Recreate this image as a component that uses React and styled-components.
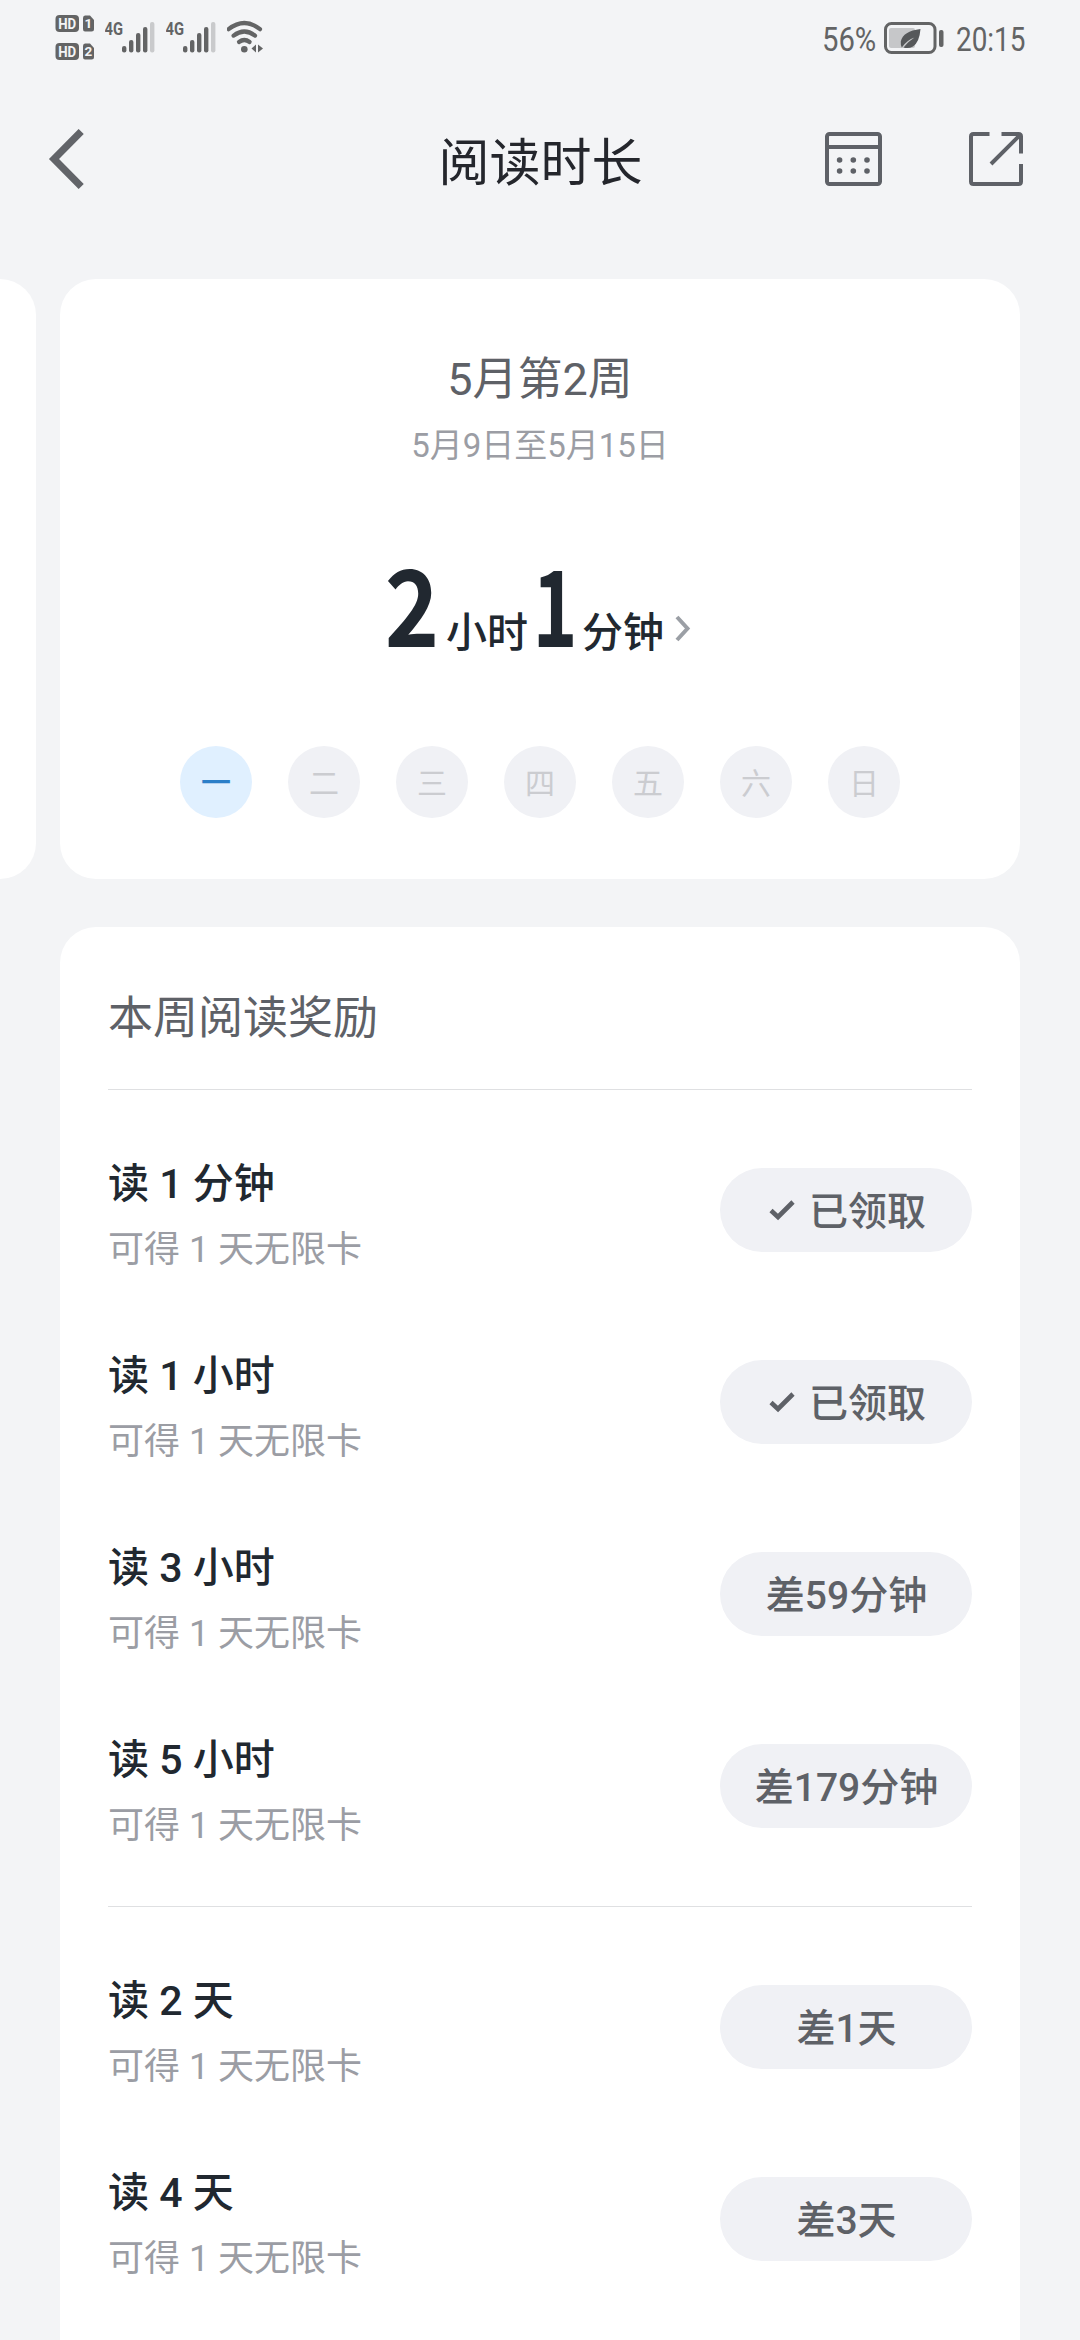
import React from "react";
import styled, { createGlobalStyle } from "styled-components";

const INK = "#212830";
const SLATE = "#5e6167";
const MUTED = "#9b9da4";
const STATUS = "#636465";
const CANVAS = "#f3f4f6";

const GlobalStyle = createGlobalStyle`
  *, *::before, *::after { box-sizing: border-box; }
  html, body { margin: 0; padding: 0; background: ${CANVAS}; }
  body { font-family: Roboto, "Noto Sans CJK SC", sans-serif; color: ${INK}; }
  svg { display: block; flex: none; }
`;

const Page = styled.main`
  width: 1080px;
  height: 2340px;
  overflow: hidden;
  display: flex;
  flex-direction: column;
  background: ${CANVAS};
`;

const StatusBar = styled.div`
  height: 76px;
  flex: none;
  display: flex;
  justify-content: space-between;
  padding: 14px 56px 0 55px;
  color: ${STATUS};
`;

const StatusLeft = styled.div`
  display: flex;
  align-items: flex-start;
`;

const StatusRight = styled.div`
  display: flex;
  align-items: center;
  height: 50px;
`;

const HdColumn = styled.div`
  display: grid;
  gap: 11px;
  margin: 1px 10px 0 0;
`;

const StatusText = styled.span`
  display: block;
  width: ${(p) => p.$width}px;
  font-size: 34px;
  line-height: 48px;
  white-space: nowrap;
  transform: scaleX(${(p) => p.$squeeze});
  transform-origin: 0 50%;
`;

const BatterySlot = styled.div`
  margin: -3px 11px 0 7px;
`;

const Header = styled.header`
  height: 166px;
  flex: none;
  display: grid;
  grid-template-columns: 1fr auto 1fr;
  align-items: center;
`;

const HeaderStart = styled.div`
  padding-left: 48px;
`;

const HeaderTitle = styled.h1`
  margin: 0;
  padding: 9px 0 0 1px;
  font-size: 51px;
  line-height: 72px;
  font-weight: 400;
  color: #24262c;
`;

const HeaderActions = styled.div`
  display: flex;
  justify-content: flex-end;
  gap: 87px;
  padding-right: 57px;
`;

const Carousel = styled.section`
  display: flex;
  gap: 24px;
  height: 600px;
  margin-top: 37px;
  flex: none;
`;

const PreviousWeek = styled.div`
  width: 36px;
  background: #fff;
  border-radius: 0 36px 36px 0;
`;

const WeekCard = styled.article`
  width: 960px;
  background: #fff;
  border-radius: 36px;
  display: flex;
  flex-direction: column;
  align-items: center;
`;

const WeekTitle = styled.h2`
  margin: 68px 0 0;
  font-size: 45px;
  line-height: 66px;
  font-weight: 400;
  color: ${SLATE};
`;

const WeekRange = styled.p`
  margin: 9px 0 0;
  font-size: 33px;
  line-height: 48px;
  color: ${MUTED};
`;

const Duration = styled.div`
  display: flex;
  align-items: baseline;
  height: 120px;
  margin: 71px 0 0 -2px;
`;

const BigDigit = styled.span`
  display: flex;
  justify-content: center;
  width: ${(p) => p.$width}px;
  font-family: "Noto Sans CJK SC", sans-serif;
  font-size: 106px;
  line-height: 120px;
  font-weight: 700;
  transform: scaleX(${(p) => p.$squeeze});
`;

const Unit = styled.span`
  font-size: 41px;
  line-height: 60px;
  font-weight: 500;
  margin: 0 ${(p) => p.$after}px 0 ${(p) => p.$before}px;
`;

const Days = styled.ul`
  display: flex;
  gap: 36px;
  list-style: none;
  margin: 85px 0 0;
  padding: 0;
`;

const Day = styled.li`
  width: 72px;
  height: 72px;
  border-radius: 50%;
  display: flex;
  align-items: center;
  justify-content: center;
  font-size: 30px;
  line-height: 44px;
  padding-top: ${(p) => (p.$active ? 2 : 4)}px;
  font-weight: ${(p) => (p.$active ? 500 : 400)};
  background: ${(p) => (p.$active ? "#e0f0ff" : "#f0f1f5")};
  color: ${(p) => (p.$active ? "#2c7fc8" : "#cbccd0")};
`;

const RewardCard = styled.section`
  flex: 1;
  min-height: 0;
  width: 960px;
  margin: 48px 0 0 60px;
  padding: 0 48px;
  background: #fff;
  border-radius: 36px 36px 0 0;
`;

const RewardHeading = styled.h2`
  margin: 0;
  height: 162px;
  padding-top: 59px;
  font-size: 45px;
  line-height: 66px;
  font-weight: 400;
  color: ${SLATE};
`;

const RewardGroup = styled.ul`
  list-style: none;
  margin: 0;
  padding: 24px 0;
  border-top: 1px solid #dfe0e2;
`;

const RewardRow = styled.li`
  height: 192px;
  display: flex;
  align-items: center;
  justify-content: space-between;
`;

const RewardText = styled.div`
  padding-top: 10px;
`;

const RewardName = styled.div`
  font-size: 41px;
  line-height: 62px;
  font-weight: 500;
`;

const RewardNote = styled.div`
  margin-top: 8px;
  font-size: 36px;
  line-height: 54px;
  color: ${MUTED};
`;

const StatusPill = styled.div`
  width: 252px;
  height: 84px;
  padding-left: ${(p) => (p.$done ? 3 : 1)}px;
  border-radius: 42px;
  display: flex;
  align-items: center;
  justify-content: center;
  gap: 14px;
  background: #f0f1f5;
  color: ${SLATE};
`;

const PillLabel = styled.span`
  padding-top: 4px;
  font-size: 39px;
  line-height: 58px;
  font-weight: 500;
`;

const HdIcon = ({ slot }) => (
  <svg width="40" height="17" viewBox="0 0 40 17">
    <rect x="0.5" y="0" width="23.5" height="17" rx="4" fill={STATUS} />
    <text x="12.2" y="13.8" fontSize="15" fontWeight="700" textAnchor="middle" textLength="18" lengthAdjust="spacingAndGlyphs" fill={CANVAS}>HD</text>
    <path d="M30 0.5h5l4 4.5v9q0 2.5-2.5 2.5H30q-2 0-2-2.500V3q0-2.500 2-2.500z" fill={STATUS} />
    <text x="33.4" y="13.4" fontSize="13.5" fontWeight="700" textAnchor="middle" fill={CANVAS}>{slot}</text>
  </svg>
);

const SignalIcon = () => (
  <svg width="61" height="46" viewBox="0 0 61 46">
    <text x="-0.5" y="21" fontSize="18" fontWeight="700" textLength="18.5" lengthAdjust="spacingAndGlyphs" fill={STATUS}>4G</text>
    <g fill={STATUS}>
      <rect x="17" y="32" width="4.4" height="6.5" rx="2.1" />
      <rect x="24" y="26" width="4.4" height="12.5" rx="2.1" />
      <rect x="31" y="19" width="4.4" height="19.5" rx="2.1" />
      <rect x="38" y="13" width="4.4" height="25.5" rx="2.1" />
    </g>
    <rect x="45" y="8" width="4.4" height="30.5" rx="2" fill="#c9cacc" />
  </svg>
);

const WifiIcon = () => (
  <svg width="40" height="46" viewBox="0 0 40 46">
    <g fill="none" stroke={STATUS} strokeWidth="4.2" strokeLinecap="round">
      <path d="M1.600 15.2Q17.300 2.800 33 15.200" />
      <path d="M6.600 21.6Q17.300 13.400 28 21.600" />
      <path d="M12 28Q17.300 24 22.600 28" />
    </g>
    <circle cx="17.300" cy="35.200" r="3.300" fill={STATUS} />
    <path d="M29 30.500v8l-4.500-4zM31 30.500v8l5-4z" fill={STATUS} />
  </svg>
);

const BatteryIcon = () => (
  <svg width="61" height="32" viewBox="0 0 61 32">
    <rect x="1.5" y="1.5" width="49.500" height="29" rx="6" fill="none" stroke={STATUS} strokeWidth="3" />
    <rect x="5" y="6" width="26" height="20" rx="2" fill="#c6c7c9" />
    <rect x="55" y="8" width="4.500" height="17" rx="2" fill={STATUS} />
    <path d="M36.500 7Q19 9 16.800 19.500Q16.500 23 17.800 25.500Q23 18 30.500 15.500Q24 19.500 19.500 25.500Q24.500 27 29 24.500Q35.500 20 36.500 7z" fill="#56585a" />
  </svg>
);

const BackIcon = () => (
  <svg width="36" height="60" viewBox="0 0 36 60">
    <path d="M33.200 2.500L6 30L33.200 57.500" fill="none" stroke="#626469" strokeWidth="7.200" />
  </svg>
);

const CalendarIcon = () => (
  <svg width="57" height="54" viewBox="0 0 57 54">
    <rect x="2" y="2" width="53" height="50" rx="2.500" fill="none" stroke={SLATE} strokeWidth="4" />
    <path d="M2 15h53" stroke={SLATE} strokeWidth="4" />
    <g fill={SLATE}>
      {[28, 39].map((y) => [14.6, 28.3, 42].map((x) => <circle key={`${x}-${y}`} cx={x} cy={y} r="2.8" />))}
    </g>
  </svg>
);

const ShareIcon = () => (
  <svg width="54" height="54" viewBox="0 0 54 54">
    <g fill="none" stroke={SLATE} strokeWidth="4">
      <path d="M20.500 2H4.500Q2 2 2 4.500V49.500Q2 52 4.500 52H49.500Q52 52 52 49.500V32" />
      <path d="M32.500 2H49.500Q52 2 52 4.500V21.500M51 3L22 32" />
    </g>
  </svg>
);

const ChevronIcon = () => (
  <svg width="16" height="32" viewBox="0 0 16 32">
    <path d="M2 2L12.500 13.500L2 25" fill="none" stroke="#9b9fa5" strokeWidth="4" />
  </svg>
);

const CheckIcon = () => (
  <svg width="26" height="22" viewBox="0 0 26 22">
    <path d="M2 11.500L9 18L24 3" fill="none" stroke={SLATE} strokeWidth="4.600" />
  </svg>
);

const DAYS = ["一", "二", "三", "四", "五", "六", "日"];

const REWARDS = [
  [
    { name: "读 1 分钟", status: "已领取", done: true },
    { name: "读 1 小时", status: "已领取", done: true },
    { name: "读 3 小时", status: "差59分钟" },
    { name: "读 5 小时", status: "差179分钟" },
  ],
  [
    { name: "读 2 天", status: "差1天" },
    { name: "读 4 天", status: "差3天" },
  ],
];

export default function App() {
  return (
    <Page>
      <GlobalStyle />
      <StatusBar>
        <StatusLeft>
          <HdColumn>
            <HdIcon slot="1" />
            <HdIcon slot="2" />
          </HdColumn>
          <SignalIcon />
          <SignalIcon />
          <WifiIcon />
        </StatusLeft>
        <StatusRight>
          <StatusText $width={55} $squeeze={0.86}>56%</StatusText>
          <BatterySlot><BatteryIcon /></BatterySlot>
          <StatusText $width={68} $squeeze={0.82}>20:15</StatusText>
        </StatusRight>
      </StatusBar>
      <Header>
        <HeaderStart><BackIcon /></HeaderStart>
        <HeaderTitle>阅读时长</HeaderTitle>
        <HeaderActions>
          <CalendarIcon />
          <ShareIcon />
        </HeaderActions>
      </Header>
      <Carousel>
        <PreviousWeek />
        <WeekCard>
          <WeekTitle>5月第2周</WeekTitle>
          <WeekRange>5月9日至5月15日</WeekRange>
          <Duration>
            <BigDigit $width={50} $squeeze={0.87}>2</BigDigit>
            <Unit $before={9} $after={5}>小时</Unit>
            <BigDigit $width={44} $squeeze={0.72}>1</BigDigit>
            <Unit $before={5} $after={11}>分钟</Unit>
            <ChevronIcon />
          </Duration>
          <Days>
            {DAYS.map((day, i) => <Day key={day} $active={i === 0}>{day}</Day>)}
          </Days>
        </WeekCard>
      </Carousel>
      <RewardCard>
        <RewardHeading>本周阅读奖励</RewardHeading>
        {REWARDS.map((group, i) => (
          <RewardGroup key={i}>
            {group.map((reward) => (
              <RewardRow key={reward.name}>
                <RewardText>
                  <RewardName>{reward.name}</RewardName>
                  <RewardNote>可得 1 天无限卡</RewardNote>
                </RewardText>
                <StatusPill $done={reward.done}>
                  {reward.done && <CheckIcon />}
                  <PillLabel>{reward.status}</PillLabel>
                </StatusPill>
              </RewardRow>
            ))}
          </RewardGroup>
        ))}
      </RewardCard>
    </Page>
  );
}
